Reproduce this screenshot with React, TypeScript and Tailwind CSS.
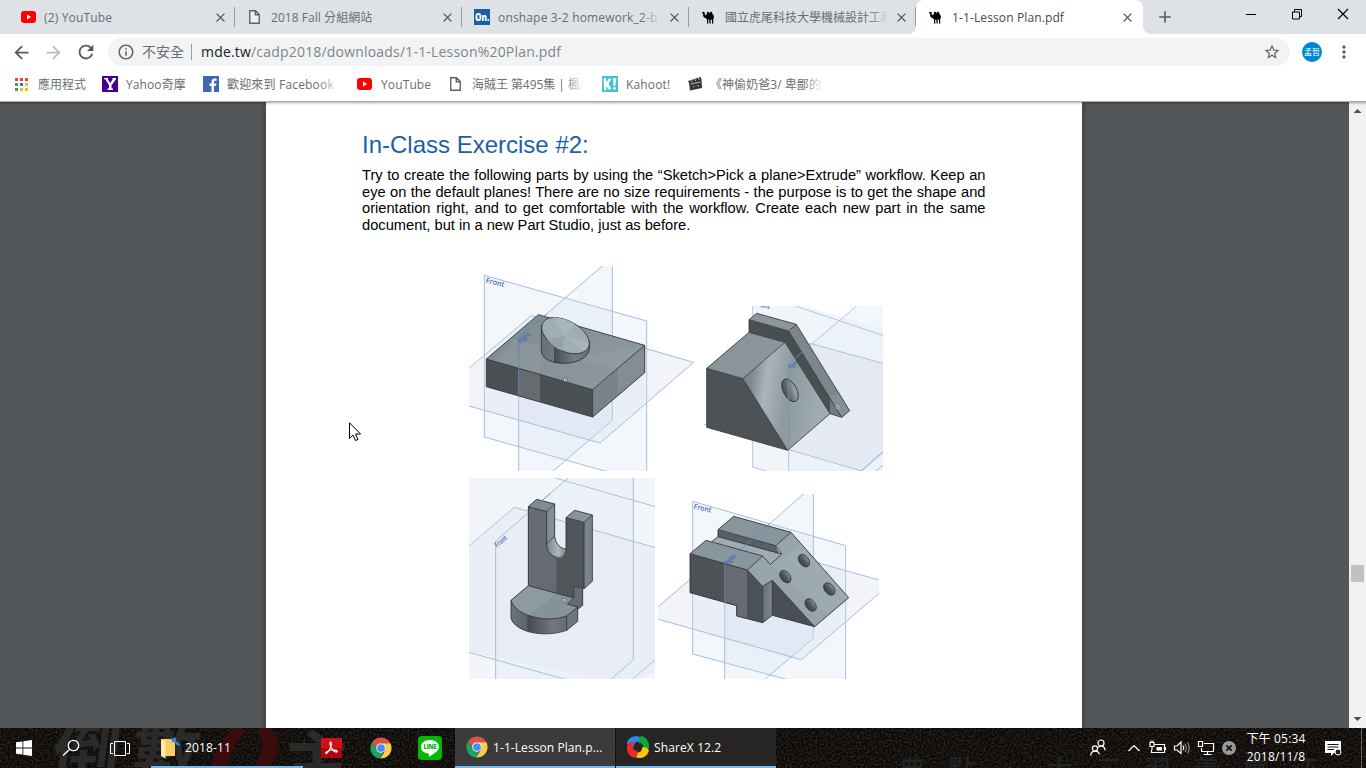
import React from "react";
import {
  MdArrowBack,
  MdArrowForward,
  MdRefresh,
  MdStarBorder,
  MdInfoOutline,
  MdMoreVert,
  MdClose,
  MdAdd,
} from "react-icons/md";

const YouTube = () => (
  <svg width="15" height="12" viewBox="0 0 15 12" className="shrink-0">
    <rect width="15" height="12" rx="3" fill="#f00" />
    <path d="M6 3.6 10.2 6 6 8.4z" fill="#fff" />
  </svg>
);

const PageIcon = () => (
  <svg width="11" height="14" viewBox="0 0 11 14" className="shrink-0">
    <path d="M.75.75H6.5L10.25 4.5V13.25H.75ZM6.3.75V4.7H10.25" fill="#fff" fillOpacity=".5" stroke="#5f6368" strokeWidth="1.4" />
  </svg>
);

const Camel = () => (
  <svg width="13" height="13" viewBox="0 0 13 13" className="shrink-0">
    <path d="M0 1.4 1.4.8 2.6 1.3 2.8 3.4 3.6 4.2 4.6 3.6 5 1.6 6 .6 7 1.2 7.3 2.5 8 1.2 9 .4 10 1.2 10.4 2.8 11.5 4.2 12 6.5 11.2 8 11.3 12.4 10 12.4 10 8.8 8.6 8.4 8.8 12.4 7.6 12.4 7.2 8.6 6.2 8.7 6.4 12.4 5 12.4 5 8.5 3.8 7.2 1.8 6.2 1 4.2 1.2 2.6 0 2.4Z" fill="#000" />
  </svg>
);

const Onshape = () => (
  <svg width="16" height="16" viewBox="0 0 16 16" className="shrink-0">
    <rect width="16" height="16" fill="#1b5faa" />
    <text x="1" y="12" fontFamily="Open Sans, sans-serif" fontWeight="800" fontSize="10" fill="#fff" textLength="14.4" lengthAdjust="spacingAndGlyphs">On.</text>
  </svg>
);

const Chrome = () => (
  <svg width="22" height="22" viewBox="-.5 -.5 25 25" className="shrink-0">
    <path d="M12 0C8.21 0 4.83 1.76 2.63 4.5L1.9 5.5 6.6 12.5 12 6.545H22.691A12 12 0 0 0 12 0z" fill="#dd5144" />
    <path d="M1.931 5.2A11.943 11.943 0 0 0 0 12c0 6.012 4.42 10.991 10.189 11.864L11.2 24 15 16 6.8 13z" fill="#1da462" />
    <path d="M14 6.545 17 14.2 11.2 24c.2 0 .4 0 .8 0 6.627 0 12-5.373 12-12 0-1.94-.45-3.8-1.3-5.455z" fill="#ffcd46" />
    <circle cx="12" cy="12" r="5.5" fill="#f1f1f1" />
    <circle cx="12" cy="12" r="4.4" fill="#4c8bf5" />
  </svg>
);

const UI = "font-['Open_Sans','Noto_Sans_CJK_TC',sans-serif]";

function Tab({ icon, title, track, fade }: { icon: React.ReactNode; title: string; track: string; fade?: boolean }) {
  return (
    <div className="flex h-[34px] w-[227px] shrink-0 items-center pl-[13px]">
      <div className="flex w-[23px] shrink-0 items-center">{icon}</div>
      <div className={`relative mt-px w-[163px] overflow-hidden whitespace-nowrap text-[12px] leading-[18px] text-[#6a6e73] ${track}`}>
        {title}
        {fade && <div className="absolute inset-y-0 right-0 w-[20px] bg-gradient-to-r from-transparent to-[#dee1e6]" />}
      </div>
      <MdClose size={15} className="ml-[6px] shrink-0 text-[#5a5e63]" />
      <div className="ml-[6px] h-5 w-px shrink-0 bg-[#999ca0]" />
    </div>
  );
}

function Bookmark({ icon, label, width, gap, track, fade }: { icon: React.ReactNode; label: string; width: string; gap: string; track: string; fade?: boolean }) {
  return (
    <div className={`flex shrink-0 items-center ${width}`}>
      {icon}
      <div className={`relative mt-px overflow-hidden whitespace-nowrap text-[12px] leading-[20px] text-[#6a6e73] ${gap} ${track}`}>
        {label}
        {fade && <div className="absolute inset-y-0 right-0 w-[20px] bg-gradient-to-r from-transparent to-white" />}
      </div>
    </div>
  );
}

function Origin({ x, y }: { x: number; y: number }) {
  return (
    <g>
      <circle cx={x} cy={y} r="6" fill="#ddd" stroke="#444" strokeWidth="2" />
      <circle cx={x} cy={y} r="1.8" fill="#444" />
    </g>
  );
}

const PlaneText = ({ x, y, r, s, w, children }: { x: number; y: number; r: string; s: number; w: number; children: string }) => (
  <text x={x} y={y} transform={r} fontFamily="Open Sans, sans-serif" fontWeight="600" fontSize={s} fill="#4268b4" textLength={w} lengthAdjust="spacingAndGlyphs">{children}</text>
);

const Block = () => (
  <svg width="225" height="205" viewBox="27 24 675 615">
    <defs>
      <linearGradient id="cyl" x1="0" x2="1"><stop offset="0" stopColor="#6b7075" /><stop offset=".26" stopColor="#73787f" /><stop offset=".27" stopColor="#474b4d" /><stop offset=".7" stopColor="#777f85" /><stop offset="1" stopColor="#656c72" /></linearGradient>
      <linearGradient id="top1" x1="0" x2="1" y2=".5"><stop offset="0" stopColor="#7e898f" /><stop offset="1" stopColor="#8d999f" /></linearGradient>
    </defs>
    <g fill="#c9dcec" fillOpacity=".22" stroke="#a3bedb" strokeWidth="3">
      <path d="M73 52 560 189V660L430 638 73 537Z" />
      <path d="M176 240 457 -2V487L176 728Z" />
      <path d="M-120 455 214 173 701 313 420 555 27 444Z" fill="#d5d9ee" fillOpacity=".3" />
    </g>
    <path d="M79 303 235 170 554 262 398 395Z" fill="url(#top1)" />
    <path d="M79 303 398 395V477L79 386Z" fill="#4b5053" />
    <path d="M176 331 240 350V432L176 414Z" fill="#666b70" />
    <path d="M398 395 554 262V344L398 477Z" fill="#7c828b" />
    <path d="M474 330 554 262V344L474 413Z" fill="#858c96" />
    <path d="M332 304 380 290 554 262 474 329Z" fill="#9aa5ab" fillOpacity=".25" />
    <path d="M165 243 260 268 236 348 100 308Z" fill="#9aa5ac" fillOpacity=".25" />
    <path d="M79 303 235 170 554 262V344L398 477 79 386ZL398 395 554 262M398 395V477" fill="none" stroke="#2d3235" strokeWidth="2.6" strokeLinejoin="round" />
    <path d="M244 203V281C250 328 376 329 388 275V250Z" fill="url(#cyl)" stroke="#2d3235" strokeWidth="2.6" />
    <path d="M247 199C256 170 304 174 345 198C383 221 398 257 380 274C356 302 293 284 261 244C247 226 242 214 247 199Z" fill="#a1adb5" stroke="#2d3235" strokeWidth="2.6" />
    <path d="M314 235 280 178C300 179 325 187 344 199ZM314 235 386 255C387 267 380 276 370 280Z" fill="#a9b5be" />
    <path d="M314 235 262 244C278 264 290 272 304 278Z" fill="#96a2aa" />
    <path d="M176 240V412M176 240 260 168" stroke="#5d87bb" strokeWidth="2.5" fill="none" />
    <PlaneText x={76} y={74} r="rotate(13 76 74)" s={22} w={57}>Front</PlaneText>
    <PlaneText x={181} y={257} r="rotate(-40 181 257)" s={20} w={40}>Right</PlaneText>
    <Origin x={316} y={365} />
  </svg>
);

const Wedge = () => (
  <svg width="179" height="165" viewBox="27 33 537 495">
    <defs>
      <linearGradient id="face2" gradientUnits="userSpaceOnUse" x1="160" y1="300" x2="370" y2="330"><stop offset="0" stopColor="#7d888e" /><stop offset=".22" stopColor="#a9b4bb" /><stop offset=".55" stopColor="#8d989f" /><stop offset="1" stopColor="#a0acb3" /></linearGradient>
      <linearGradient id="rib2" x1="0" y1="1" x2="1" y2="0"><stop offset="0" stopColor="#565b5e" /><stop offset="1" stopColor="#3f4447" /></linearGradient>
      <linearGradient id="hole2" x1="0" y1=".3" x2="1" y2=".7"><stop offset="0" stopColor="#454b4f" /><stop offset=".5" stopColor="#6e777c" /><stop offset="1" stopColor="#aab4ba" /></linearGradient>
    </defs>
    <path d="M173 -10 600 112V640L173 517Z" fill="#f1f5fa" />
    <path d="M281 206 500 20H564V528H281Z" fill="#e8eff7" fillOpacity=".5" />
    <path d="M173 -10 600 133M281 206 500 20M281 206V540M173 33V517L220 530" fill="none" stroke="#a3bedb" strokeWidth="2.5" />
    <path d="M345 145 600 215V440L500 528 281 464Z" fill="#e4e6f2" fillOpacity=".8" stroke="#a0bdd9" strokeWidth="2.5" />
    <path d="M27 390 37 385M495 530 564 470M540 530 564 510" stroke="#8fb0d3" strokeWidth="2.5" />
    <path d="M35 220 162 112 270 142 144 251Z" fill="#89959b" />
    <path d="M35 220 144 251 278 466 35 397Z" fill="#4c5255" />
    <path d="M144 251 270 142 405 356 278 466Z" fill="url(#face2)" />
    <path d="M162 74 281 108 440 366 405 356 270 142 162 112Z" fill="url(#rib2)" />
    <path d="M162 74 185 55 304 88 281 108Z" fill="#8b979d" />
    <path d="M281 108 304 88 464 347 440 367Z" fill="#7c878d" />
    <path d="M405 305 430 292 464 347 440 367 405 356Z" fill="#8c949a" fillOpacity=".6" />
    <g fill="none" stroke="#2d3235" strokeWidth="2.4" strokeLinejoin="round">
      <path d="M35 220 162 112 270 142 405 356 278 466 35 397ZL144 251 278 466M144 251 270 142" />
      <path d="M162 112V74L185 55 304 88 464 347 440 367 281 108 162 74M281 108 304 88M405 356 440 367" />
    </g>
    <ellipse cx="285" cy="286" rx="20" ry="37" transform="rotate(-28 285 286)" fill="url(#hole2)" stroke="#2d3235" strokeWidth="2.6" />
    <path d="M281 206V464M281 206 347 150" fill="none" stroke="#6d93bd" strokeWidth="2.5" />
    <PlaneText x={195} y={36} r="rotate(12 195 36)" s={20} w={29}>ont</PlaneText>
    <PlaneText x={286} y={223} r="rotate(-38 286 223)" s={17} w={30}>Right</PlaneText>
    <circle cx="428" cy="337" r="5" fill="none" stroke="#ccc" strokeWidth="2" />
  </svg>
);

const Fork = () => (
  <svg width="186" height="201" viewBox="27 24 558 603">
    <defs>
      <linearGradient id="u3" x1="0" x2="1"><stop offset="0" stopColor="#7c868c" /><stop offset=".6" stopColor="#aab7be" /><stop offset="1" stopColor="#7f8a90" /></linearGradient>
      <linearGradient id="base3" x1="0" x2="1"><stop offset="0" stopColor="#6d737c" /><stop offset=".29" stopColor="#5d636a" /><stop offset=".3" stopColor="#454a4e" /><stop offset=".75" stopColor="#70777d" /><stop offset="1" stopColor="#666d74" /></linearGradient>
    </defs>
    <rect x="27" y="24" width="558" height="603" fill="#f2f6fa" />
    <path d="M107 213 320 24H520V570L450 630H107Z" fill="#e9eff6" fillOpacity=".7" />
    <path d="M27 228 163 112 600 237V600L500 640 27 546Z" fill="#e7ebf4" fillOpacity=".7" />
    <path d="M107 640V213L324 24M520 20V570L450 630M285 24 600 114M27 228 163 112 600 237M20 545 340 635M515 630 590 564" fill="none" stroke="#a8c1db" strokeWidth="3" />
    <path d="M205 110 260 125V218C260 270 317 280 318 237V143L372 157V356L341 349V384L205 347Z" fill="#50565a" />
    <path d="M205 110 260 125V218C262 245 273 256 289 259V372L205 347Z" fill="#666b73" />
    <path d="M205 110 230 88 284 102 260 125Z" fill="#7e8c94" />
    <path d="M318 143 344 121 397 135 372 157Z" fill="#88959c" />
    <path d="M260 125 284 102V199L260 220Z" fill="#868d96" />
    <path d="M372 157 397 135V334L372 356Z" fill="#7c828b" />
    <path d="M260 220 284 199C287 222 303 237 318 237C318 271 266 272 260 220Z" fill="url(#u3)" />
    <path d="M341 349 368 356V406L353 418 322 402 341 384Z" fill="#656c73" />
    <path d="M153 391 205 347 341 384 322 402 353 411 320 438C260 460 166 438 153 391Z" fill="#84929a" />
    <path d="M205 347 289 371 207 438C178 427 158 411 153 391Z" fill="#93a0a8" fillOpacity=".6" />
    <path d="M153 391C166 438 260 460 320 438V480C250 505 166 486 153 445Z" fill="url(#base3)" />
    <path d="M320 438 353 411V454L320 481Z" fill="#70767f" />
    <path d="M205 110 260 125V218C260 270 317 276 318 237V143L372 157V356L341 349V384L205 347ZL230 88 284 102V199C287 222 303 237 318 237M260 125 284 102M260 220 284 199M318 143 344 121 397 135V334L372 356M372 157 397 135M368 356V406L353 418M341 384 322 402 353 411V454L320 481C250 505 166 486 153 445V391C166 438 260 460 320 438L353 411M320 438V481M153 391 205 347" fill="none" stroke="#2d3235" strokeWidth="2.6" strokeLinejoin="round" />
    <path d="M205 128 270 70" stroke="#6f8fb2" strokeWidth="2" />
    <PlaneText x={111} y={233} r="rotate(-40 111 233)" s={21} w={42}>Front</PlaneText>
    <Origin x={313} y={391} />
  </svg>
);

const Bracket = () => (
  <svg width="221" height="185" viewBox="9 27 663 555">
    <defs>
      <linearGradient id="hole4" x1="0" x2="1"><stop offset="0" stopColor="#393e41" /><stop offset=".55" stopColor="#555c60" /><stop offset="1" stopColor="#8a949a" /></linearGradient>
      <linearGradient id="notch4" x1="0" x2="1"><stop offset="0" stopColor="#687077" /><stop offset="1" stopColor="#7f878e" /></linearGradient>
    </defs>
    <g fill="#c9dcec" fillOpacity=".22" stroke="#a3bedb" strokeWidth="3">
      <path d="M113 49 572 182V640L390 582 113 507Z" />
      <path d="M209 236 475 0V460L209 685Z" />
      <path d="M-20 390 244 165 690 290V310L439 524 0 400Z" fill="#d5d9ee" fillOpacity=".3" />
    </g>
    <path d="M105 206 153 166 323 213 277 255Z" fill="#8a969d" />
    <path d="M170 170 189 155 380 207 346 239 323 213Z" fill="#a0acb4" />
    <path d="M189 134 362 182 373 206 189 155Z" fill="#596064" />
    <path d="M189 134 236 94 408 142 362 182Z" fill="#89959c" />
    <path d="M105 206 277 255 323 304V413L245 393V362L105 323Z" fill="#4c5255" />
    <path d="M209 236 276 255V401L245 393V362L209 353Z" fill="#656a73" />
    <path d="M277 255 323 213 346 239 380 207 362 182 408 142 581 338 479 425 352 286 323 304Z" fill="#97a4ab" />
    <path d="M350 240 440 178 581 338 520 390Z" fill="#a7b3ba" fillOpacity=".4" />
    <path d="M323 304 352 286V390L323 413Z" fill="url(#notch4)" />
    <path d="M352 286 479 425 352 391Z" fill="#4a4f53" />
    <path d="M105 206 153 166 323 213 346 239 380 207 362 182 408 142 581 338 479 425 352 391 323 413 245 393V362L105 323ZL277 255 323 304V413M277 255 323 213M323 304 352 286V391M352 286 479 425M170 170 189 155V134L236 94 408 142M189 134 362 182M189 155 380 207" fill="none" stroke="#2d3235" strokeWidth="2.6" strokeLinejoin="round" />
    {[[447, 227], [391, 275], [523, 312], [467, 360]].map(([x, y]) => (
      <ellipse key={x} cx={x} cy={y} rx="14" ry="21" transform={`rotate(-38 ${x} ${y})`} fill="url(#hole4)" stroke="#2d3235" strokeWidth="2.3" />
    ))}
    <path d="M209 236V355M209 236 342 118" stroke="#5d87bb" strokeWidth="2.5" fill="none" />
    <PlaneText x={115} y={71} r="rotate(13 115 71)" s={22} w={54}>Front</PlaneText>
    <PlaneText x={215} y={243} r="rotate(-42 215 243)" s={20} w={40}>Right</PlaneText>
  </svg>
);

const BODY = [
  "Try to create the following parts by using the “Sketch>Pick a plane>Extrude” workflow. Keep an",
  "eye on the default planes! There are no size requirements - the purpose is to get the shape and",
  "orientation right, and to get comfortable with the workflow. Create each new part in the same",
];

function TitleBar() {
  return (
    <div className="flex h-[34px] bg-[#dee1e6] pl-2">
      <Tab icon={<YouTube />} title="(2) YouTube" track="tracking-[0.15px]" />
      <Tab icon={<span className="pl-[1px]"><PageIcon /></span>} title="2018 Fall 分組網站" track="tracking-[0.05px]" />
      <Tab icon={<span className="-ml-[1px]"><Onshape /></span>} title="onshape 3-2 homework_2-b |" track="tracking-[0.16px]" fade />
      <Tab icon={<Camel />} title="國立虎尾科技大學機械設計工程系" track="" fade />
      <div className="relative flex h-[34px] w-[227px] shrink-0 items-center rounded-t-lg bg-white pl-[13px]">
        <div className="absolute -left-2 bottom-0 h-2 w-2 bg-white"><div className="h-2 w-2 rounded-br-lg bg-[#dee1e6]" /></div>
        <div className="absolute -right-2 bottom-0 h-2 w-2 bg-white"><div className="h-2 w-2 rounded-bl-lg bg-[#dee1e6]" /></div>
        <div className="w-[23px] shrink-0"><Camel /></div>
        <div className="mt-px w-[163px] whitespace-nowrap text-[12px] tracking-[0.12px] text-[#45494d]">1-1-Lesson Plan.pdf</div>
        <MdClose size={15} className="ml-[5px] text-[#5a5e63]" />
      </div>
      <MdAdd size={20} className="ml-[12px] mt-[7px] shrink-0 text-[#5a5e63]" />
      <svg width="104" height="14" viewBox="0 0 104 14" className="ml-[71px] mt-[7px] shrink-0" fill="none" stroke="#000">
        <path d="M0 7.5H10M46.500 5H53.500V12H46.500ZM48.500 5V2.500H55.500V9.500H53.500" />
        <path d="M92 2 102 12M102 2 92 12" strokeWidth="1.2" />
      </svg>
    </div>
  );
}

function Toolbar() {
  return (
    <div className="flex h-9 items-center bg-white pl-[11px]">
      <MdArrowBack size={21} className="shrink-0 text-[#55585c]" />
      <MdArrowForward size={21} className="ml-[11px] shrink-0 text-[#bbb]" />
      <MdRefresh size={22} className="ml-[11px] shrink-0 text-[#55585c]" />
      <div className="ml-[11px] flex h-7 w-[1182px] shrink-0 items-center rounded-full bg-[#f1f3f4] pl-[9px]">
        <MdInfoOutline size={18} className="shrink-0 text-[#5f6368]" />
        <span className="ml-[7px] w-[49px] shrink-0 whitespace-nowrap text-[14px] leading-7 text-[#6a6e73]">不安全</span>
        <div className="h-4 w-px shrink-0 bg-[#9a9da1]" />
        <span className="ml-[9px] flex-1 whitespace-nowrap text-[14px] leading-7 tracking-[0.19px] text-[#80868b]">
          <span className="text-[#202124]">mde.tw</span>/cadp2018/downloads/1-1-Lesson%20Plan.pdf
        </span>
        <MdStarBorder size={18} className="mr-[9px] text-[#5f6368]" />
      </div>
      <div className="ml-[12px] flex h-5 w-5 shrink-0 items-center justify-center whitespace-nowrap rounded-full bg-[#0288d1] text-[8px] text-white">孟哲</div>
      <MdMoreVert size={20} className="ml-[12px] shrink-0 text-[#5f6368]" />
    </div>
  );
}

const APPS = ["#ea4335", "#ea4335", "#ea4335", "#34a853", "#1a73e8", "#fbbc04", "#34a853", "#fbbc04", "#fbbc04"];

function Bookmarks() {
  return (
    <div className="flex h-[31px] items-center bg-white pb-[3px] pl-[15px]">
      <Bookmark width="w-[87px]" gap="ml-[10px]" track="" label="應用程式" icon={
        <svg width="13" height="13" className="shrink-0">{APPS.map((c, i) => <rect key={i} x={(i % 3) * 5} y={Math.floor(i / 3) * 5} width="3" height="3" fill={c} />)}</svg>
      } />
      <Bookmark width="w-[101px]" gap="ml-[8px]" track="tracking-[0.1px]" label="Yahoo奇摩" icon={
        <svg width="16" height="16" className="shrink-0"><rect width="16" height="16" fill="#400090" /><path d="M2 2H6V3.400L8.200 7 10.500 3.400V2H14V3.300L9.500 9.300V12.500H11V14H5.500V12.500H7V9.300L3.300 3.300H2Z" fill="#fff" /></svg>
      } />
      <Bookmark width="w-[154px]" gap="ml-[8px] w-[112px]" track="tracking-[0.18px]" label="歡迎來到 Facebook" fade icon={
        <svg width="16" height="16" className="shrink-0"><rect width="16" height="16" fill="#4267b2" /><path d="M8.500 16V10H6.500V7.600H8.500V5.800C8.500 3.700 9.800 2.500 11.800 2.500L13.500 2.600V4.700H12.300C11.300 4.700 11 5.200 11 6V7.600H13.400L13 10H11V16Z" fill="#fff" /></svg>
      } />
      <Bookmark width="w-[93px]" gap="ml-[9px]" track="tracking-[0.12px]" label="YouTube" icon={<YouTube />} />
      <Bookmark width="w-[152px]" gap="ml-[11px] w-[112px]" track="tracking-[-0.05px]" label="海賊王 第495集 | 楓林網" fade icon={<PageIcon />} />
      <Bookmark width="w-[86px]" gap="ml-[8px]" track="tracking-[0.15px]" label="Kahoot!" icon={
        <svg width="16" height="16" className="shrink-0"><rect width="16" height="16" fill="#45bfd3" /><path d="M1.500 2.500 4 2 4.300 6.500 7 2.300 9.500 3.200 6.500 7.500 9.500 13 6.500 13.500 4.500 10V14.500L2 14ZM11 2.500 14.500 2 13.200 10H11.500ZM11.200 11.200H13.600V13.600H11.200Z" fill="#fff" /></svg>
      } />
      <Bookmark width="w-[140px]" gap="ml-[7px] w-[114px]" track="tracking-[0.05px]" label="《神偷奶爸3/ 卑鄙的我" fade icon={
        <svg width="15" height="14" viewBox="0 0 15 14" className="shrink-0"><path d="M0 4 12.500 0 13.500 2.500 14 11 2 13.500 1 6Z" fill="#333" /><path d="M3 3.200 4.500 5M6.500 2 8 4M10 1 11.500 3M2.500 7 12.500 5M5 9 6.500 10M9 8 11 9.500" stroke="#ddd" strokeWidth=".8" /></svg>
      } />
    </div>
  );
}

function Taskbar() {
  return (
    <div className="relative flex h-10 overflow-hidden bg-[#090807] text-white">
      <svg width="1366" height="40" className="absolute inset-0" fontFamily="Noto Sans CJK TC, sans-serif">
        <defs>
          <filter id="grain"><feTurbulence type="fractalNoise" baseFrequency=".5" numOctaves="3" seed="4" /><feColorMatrix values="0 0 0 0 .25  0 0 0 0 .17  0 0 0 0 .12  0 .7 0 0 -.26" /></filter>
        </defs>
        <rect width="1366" height="40" filter="url(#grain)" />
        <g fontWeight="700" fontSize="68" fill="#2b2a29">
          <text x="56" y="50" transform="skewX(-8)">倒</text>
          <text x="135" y="50" transform="skewX(-6)">數</text>
          <text x="283" y="60">主</text>
        </g>
        <path d="M212 40C214 22 224 8 236 -2L246 4C236 12 229 26 228 40ZM256 -2H268C280 10 282 26 268 40H252C265 24 266 12 256 -2Z" fill="#3c0c0c" />
        <text x="902" y="51" fontSize="27" fill="#252525" letterSpacing="22" transform="skewX(-5)">典點．大三習義會江</text>
      </svg>
      <div className="relative flex h-10 w-full items-center">
        <svg width="16" height="16" viewBox="0 0 16 16" className="ml-4 shrink-0" fill="#fff"><path d="M0 2.300 6.500 1.400V7.500H0ZM7.300 1.300 16 0V7.500H7.300ZM0 8.400H6.500V14.600L0 13.700ZM7.300 8.400H16V16L7.300 14.700Z" /></svg>
        <svg width="18" height="18" viewBox="0 0 18 18" className="ml-[31px] shrink-0" fill="none" stroke="#fff" strokeWidth="1.3"><circle cx="10.500" cy="6.500" r="5.200" /><path d="M6.800 10.200 0 16.500" /></svg>
        <svg width="20" height="15" viewBox="0 0 20 15" className="ml-[29px] shrink-0" fill="none" stroke="#fff"><path d="M4.500.5H15.500V14.500H4.500ZM3 2.500H.5V12.500H3M17 2.500H19.500V12.500H17" /></svg>
        <div className="ml-[21px] flex h-10 w-[152px] shrink-0 items-center border-b-2 border-[#76b9ed] pl-[9px]">
          <svg width="21" height="23" viewBox="0 0 21 23" className="shrink-0"><path d="M1 3H11L12.500 5H15V20H1Z" fill="#f5cf63" /><path d="M1 3 5.500 5V22.500L1 20Z" fill="#ffe9a5" /><path d="M10 1 13 2.500 15 1 16.500 3 15.500 5 19 7 20 10 17 9 15 6.500 12.500 6.500 12 4Z" fill="#2b8fe0" /></svg>
          <span className="ml-[4px] mt-px text-[12px] tracking-[0.12px]">2018-11</span>
        </div>
        <svg width="21" height="20" viewBox="0 0 21 20" className="ml-[18px] shrink-0"><rect width="21" height="20" fill="#b3060c" /><rect width="21" height="10" fill="#cf1218" /><path d="M9.500 4C8.500 4 9 7 10.300 9.500 11.500 12 14 14.500 16 14 17.500 12.800 14 11.500 10.500 12 7.500 12.500 4 14.500 4.800 15.500 6.500 16.500 10.800 8 10.500 5.500Q10.300 4 9.500 4Z" fill="none" stroke="#fff" strokeWidth="1.100" /></svg>
        <div className="ml-[28px] shrink-0"><Chrome /></div>
        <svg width="24" height="24" viewBox="0 0 24 24" className="ml-[26px] shrink-0"><rect width="24" height="24" rx="4" fill="#00b900" /><path d="M12 4C6.500 4 3 7 3 11 3 14.500 6 17 10.300 17.700 11.500 18 11 19 10.900 20.800 15 18.500 21 15 21 11 21 7 17.500 4 12 4Z" fill="#fff" /><text x="5.500" y="13.200" fontFamily="Open Sans, sans-serif" fontWeight="800" fontSize="6" fill="#00b900" textLength="13">LINE</text></svg>
        <div className="ml-[13px] flex h-10 w-40 shrink-0 items-center border-b-2 border-[#76b9ed] bg-[#3b3b3b] pl-[11px]">
          <Chrome />
          <span className="ml-[5px] mt-px whitespace-nowrap text-[12px] tracking-[0.08px]">1-1-Lesson Plan.p...</span>
        </div>
        <div className="ml-px flex h-10 w-40 shrink-0 items-center border-b-2 border-[#76b9ed] bg-[#272523] pl-[11px]">
          <svg width="22" height="22" viewBox="0 0 22 22" className="shrink-0">
            <path d="M0 7.500C1 0 10-1.500 15 2L17 8C12 3.500 7 5 6.500 11 4 11 1.500 10 0 7.500Z" fill="#2f86f0" />
            <path d="M14.500 0C22 2 24 11 20 15.500L14 17C18.500 13 17 7 11 6.500 11 4 12 1.500 14.500 0Z" fill="#13a538" />
            <path d="M22 14.500C20 22 12 24 7 20L5 14C10 18.500 15 17 15.500 11 18 11 21 12 22 14.500Z" fill="#ffc80a" />
            <path d="M7.500 22C0 20 -2 12 1.500 7L8 5C4 9 5.500 15 11 15.500 11 18 10 20.500 7.500 22Z" fill="#ec2b24" />
          </svg>
          <span className="ml-[5px] mt-px whitespace-nowrap text-[12px] tracking-[0.12px]">ShareX 12.2</span>
        </div>
        <svg width="148" height="20" viewBox="0 0 148 20" className="ml-[314px] shrink-0" fill="none" stroke="#fff" strokeWidth="1.200">
          <circle cx="11" cy="5" r="3" /><circle cx="5" cy="10.500" r="2.600" /><path d="M.7 17.500C1 13.500 3 13.200 5 13.200S9 13.500 9.300 16.500M8 9.500C9 8.300 10 8.100 11 8.100 13.500 8.100 15 9.500 15 12.500" />
          <path d="M38.500 13 44 7.500 49.500 13" />
          <path d="M64.500 6.500H74.500V14.500H61.500V12M75.500 9V12" /><path d="M66.500 9H72V12.500H66.500Z" fill="#fff" stroke="none" /><path d="M60 4.500V8.500H64V4.500ZM61 2.500V5M63 2.500V5M62 8.500V12" />
          <path d="M84.500 8H87L91 4V15.500L87 12H84.500ZM93 7.500Q94.500 9.800 93 12" /><path d="M95 6Q97.500 9.800 95 14M97.500 4.500Q101 9.800 97.500 15.500" stroke="#888" />
          <path d="M114 5.500H123.500V13.500H111.500V10M117.500 13.500V16.500M113.500 16.500H121.500M108.500 3.500H112.500V8.500H108.500Z" />
          <circle cx="139" cy="10" r="7" fill="#999" stroke="none" /><path d="M136.300 7.300 141.700 12.700M141.700 7.300 136.300 12.700" stroke="#111" strokeWidth="1.700" />
        </svg>
        <div className="ml-[3px] w-[70px] shrink-0 whitespace-nowrap text-center text-[12px] leading-[18px] tracking-[0.18px]">
          <div>下午 05:34</div>
          <div>2018/11/8</div>
        </div>
        <svg width="17" height="17" viewBox="0 0 17 17" className="ml-[14px] shrink-0"><path d="M0 1H16V13H9L6 16V13H0Z" fill="#fff" /><path d="M2.500 4.500H13.500M2.500 7H13.500M2.500 9.500H9" stroke="#111" /><circle cx="13" cy="12" r="3" fill="#222" stroke="#fff" /></svg>
        <div className="ml-[19px] h-10 w-px shrink-0 bg-[#66625f]" />
      </div>
    </div>
  );
}

export default function App() {
  return (
    <div className={`flex h-[768px] w-[1366px] flex-col overflow-hidden ${UI}`}>
      <TitleBar />
      <Toolbar />
      <Bookmarks />
      <div className="relative flex h-[627px] border-t border-[#a9abad] bg-[#525659]">
        <div className="w-[266px] shrink-0 bg-gradient-to-r from-[#525659] from-[98%] to-[#44484b]" />
        <div className="w-[816px] shrink-0 bg-white pt-[27px] font-['Liberation_Sans',sans-serif]">
          <h1 className="pl-24 text-[24px] leading-[32px] text-[#1b5faa]">In-Class Exercise #2:</h1>
          <div className="ml-24 mt-[6px] w-[623.500px] text-[14.67px] leading-[16.7px] text-black">
            {BODY.map((l) => <p key={l} className="whitespace-nowrap [text-align-last:justify]">{l}</p>)}
            <p className="whitespace-nowrap">document, but in a new Part Studio, just as before.</p>
          </div>
          <div className="mt-[32px] flex flex-col gap-[7px] pl-[203px]">
            <div className="flex items-end gap-[10px]"><Block /><Wedge /></div>
            <div className="flex items-end gap-[3px]"><Fork /><Bracket /></div>
          </div>
        </div>
        <div className="flex-1 bg-gradient-to-r from-[#44484b] to-[#525659] to-[2%]" />
        <div className="flex w-[17px] shrink-0 flex-col items-center bg-[#f1f1f1]">
          <svg width="17" height="463" className="shrink-0"><path d="M4.500 11 8.500 7 12.500 11Z" fill="#505050" /></svg>
          <div className="h-[17px] w-[13px] shrink-0 bg-[#c1c1c1]" />
          <svg width="17" height="146"><path d="M4.500 135 8.500 139 12.500 135Z" fill="#505050" /></svg>
        </div>
        <div className="absolute inset-x-0 top-0 h-[3px] bg-gradient-to-b from-black/25 to-transparent" />
        <svg width="13" height="20" viewBox="0 0 13 20" className="absolute left-[349px] top-[320px]"><path d="M.5.8V16.500L4 13 6.500 18.500 9 17.500 6.600 12H11.600Z" fill="#fff" stroke="#000" /></svg>
      </div>
      <Taskbar />
    </div>
  );
}
